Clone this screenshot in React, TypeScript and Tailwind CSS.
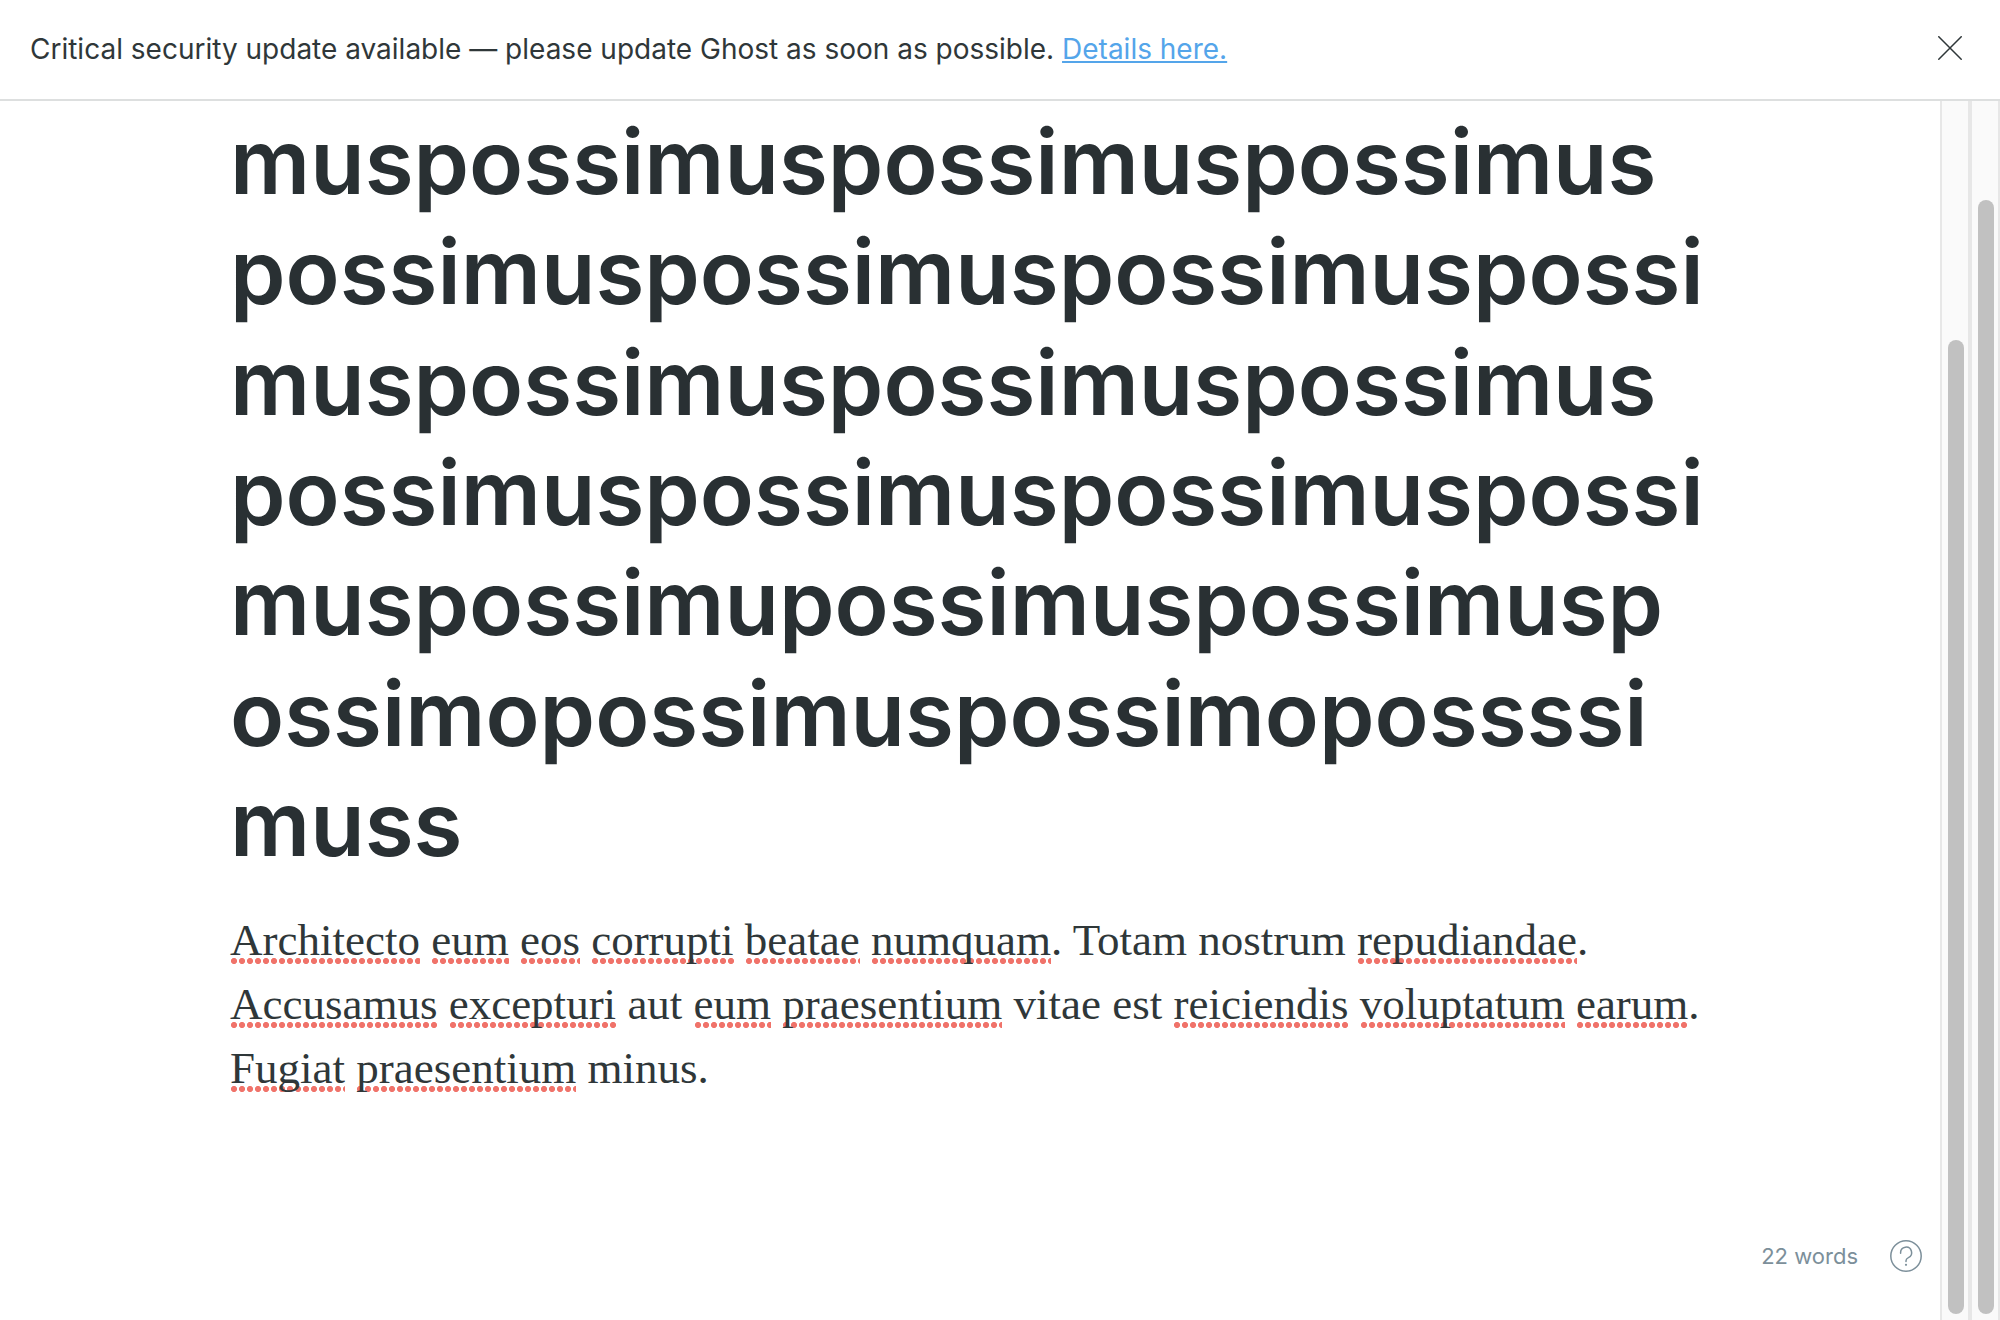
import type { ReactNode } from "react";

const titleLines = [
  "muspossimuspossimuspossimus",
  "possimuspossimuspossimuspossi",
  "muspossimuspossimuspossimus",
  "possimuspossimuspossimuspossi",
  "muspossimupossimuspossimusp",
  "ossimopossimuspossimopossssi",
  "muss",
];

function Misspelled({ children }: { children: ReactNode }) {
  return (
    <span className="bg-[radial-gradient(circle,#f0736a_2.7px,transparent_3.4px)] bg-[length:8px_6px] bg-[position:0_calc(100%-1px)] bg-repeat-x">
      {children}
    </span>
  );
}

function Scrollbar({ thumb }: { thumb: string }) {
  return (
    <div
      aria-hidden="true"
      className={`flex w-[30px] shrink-0 flex-col border-x-2 border-[#e7e7e7] bg-[#fafafa] px-1.5 pb-1.5 ${thumb}`}
    >
      <div className="w-4 flex-1 rounded-full bg-[#c1c1c1]" />
    </div>
  );
}

export default function App() {
  return (
    <div className="flex h-screen flex-col overflow-hidden bg-white font-['Inter',sans-serif] text-[#2f3739]">
      <header className="flex shrink-0 items-start justify-between border-b-2 border-[#dddfdf] py-6 pr-[38px] pl-[30px]">
        <p className="text-[28px] leading-[51px]">
          Critical security update available — please update Ghost as soon as possible.{" "}
          <a href="#details" className="text-[#54a5ea] underline decoration-2 underline-offset-2">
            Details here.
          </a>
        </p>
        <button type="button" aria-label="Close" className="mt-3 size-6">
          <svg viewBox="0 0 24 24" className="size-6" fill="none" stroke="#2f3739" strokeWidth="1.5">
            <path d="M0.3 0.3 23.7 23.7M23.7 0.3 0.3 23.7" />
          </svg>
        </button>
      </header>

      <div className="flex min-h-0 flex-1">
        <div className="flex min-w-0 flex-1 flex-col">
          <main className="mx-auto w-full max-w-[1480px] flex-1 pt-1.5">
            <h1 className="text-[89px] leading-[1.24] font-semibold whitespace-nowrap text-[#293033]">
              {titleLines.map((line, i) => (
                <span key={i} className="block">
                  {line}
                </span>
              ))}
            </h1>
            <p className="pt-7 font-['Liberation_Serif',serif] text-[45px] leading-[64px]">
              <Misspelled>Architecto</Misspelled> <Misspelled>eum</Misspelled> <Misspelled>eos</Misspelled>{" "}
              <Misspelled>corrupti</Misspelled> <Misspelled>beatae</Misspelled> <Misspelled>numquam</Misspelled>. Totam
              nostrum <Misspelled>repudiandae</Misspelled>.<br />
              <Misspelled>Accusamus</Misspelled> <Misspelled>excepturi</Misspelled> aut <Misspelled>eum</Misspelled>{" "}
              <Misspelled>praesentium</Misspelled> vitae est <Misspelled>reiciendis</Misspelled>{" "}
              <Misspelled>voluptatum</Misspelled> <Misspelled>earum</Misspelled>.<br />
              <Misspelled>Fugiat</Misspelled> <Misspelled>praesentium</Misspelled> minus.
            </p>
          </main>
          <footer className="flex shrink-0 items-center justify-end gap-8 pr-[18px] pb-12 text-[#7c8f9a]">
            <span className="text-[22px] leading-8">22 words</span>
            <a href="#help" aria-label="Help" className="size-8">
              <svg viewBox="0 0 32 32" className="size-8" fill="none" stroke="currentColor" strokeWidth="1.5">
                <circle cx="16" cy="16" r="15.2" />
                <path d="M10.6 13.2v-.6a5.5 5.5 0 1 1 7.8 5c-1.5.7-2.4 1.7-2.4 3.2v.7" strokeLinecap="round" />
                <circle cx="16" cy="24.8" r="1.1" fill="currentColor" stroke="none" />
              </svg>
            </a>
          </footer>
        </div>
        <Scrollbar thumb="pt-[239px]" />
        <Scrollbar thumb="pt-[99px]" />
      </div>
    </div>
  );
}
